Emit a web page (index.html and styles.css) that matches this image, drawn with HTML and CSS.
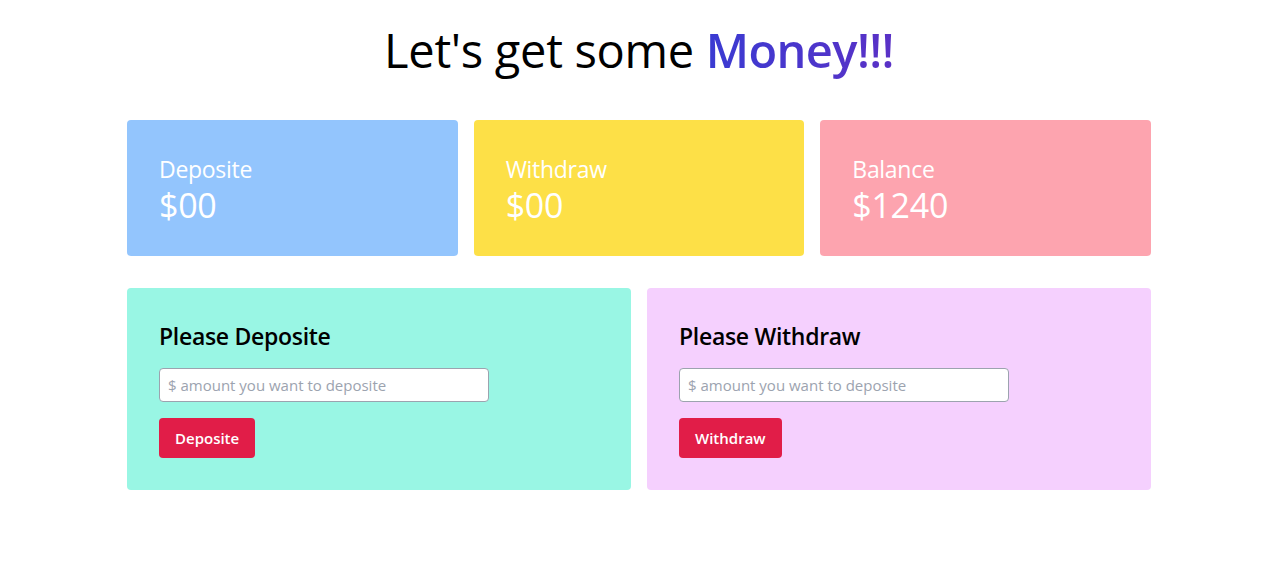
FILE: index.html
```html
<!DOCTYPE html>
<html lang="en">
<head>
<meta charset="utf-8">
<title>Money</title>
<link rel="stylesheet" href="styles.css">
</head>
<body>
<main class="app">
  <h1 class="title">Let's get some <span class="money">Money!!!</span></h1>
  <section class="stats">
    <div class="stat stat-blue">
      <div class="stat-label">Deposite</div>
      <div class="stat-value">$00</div>
    </div>
    <div class="stat stat-yellow">
      <div class="stat-label">Withdraw</div>
      <div class="stat-value">$00</div>
    </div>
    <div class="stat stat-pink">
      <div class="stat-label">Balance</div>
      <div class="stat-value">$1240</div>
    </div>
  </section>
  <section class="forms">
    <div class="panel panel-teal">
      <h2 class="panel-title">Please Deposite</h2>
      <input class="field" type="text" placeholder="$ amount you want to deposite">
      <button class="btn" type="button">Deposite</button>
    </div>
    <div class="panel panel-purple">
      <h2 class="panel-title">Please Withdraw</h2>
      <input class="field" type="text" placeholder="$ amount you want to deposite">
      <button class="btn" type="button">Withdraw</button>
    </div>
  </section>
</main>
</body>
</html>
```
FILE: styles.css
```css
* { box-sizing: border-box; }
html, body { margin: 0; padding: 0; background: #fff; }
body {
  font-family: "Open Sans", "Noto Sans", "Liberation Sans", sans-serif;
  color: #000;
  padding-left: 9px;
}
.app {
  width: 1024px;
  margin: 0 auto;
  padding-top: 26px;
}
.title {
  margin: 0;
  text-align: center;
  font-size: 47px;
  line-height: 48px;
  font-weight: 400;
  letter-spacing: -0.3px;
}
.money {
  font-weight: 600;
  letter-spacing: -0.6px;
  background: linear-gradient(90deg, #3a3bd2, #5a31c6);
  -webkit-background-clip: text;
  background-clip: text;
  color: transparent;
}
.stats {
  margin-top: 46px;
  display: grid;
  grid-template-columns: repeat(3, 1fr);
  gap: 16px;
}
.stat {
  padding: 33px 32px 31px;
  border-radius: 4px;
  color: #fff;
  height: 136px;
}
.stat-blue { background: #93c5fd; }
.stat-yellow { background: #fde047; }
.stat-pink { background: #fda4af; }
.stat-label { font-size: 23px; line-height: 32px; letter-spacing: -0.3px; }
.stat-value { font-size: 34px; line-height: 40px; letter-spacing: -0.3px; }
.forms {
  margin-top: 32px;
  display: grid;
  grid-template-columns: 1fr 1fr;
  gap: 16px;
}
.panel {
  padding: 32px;
  border-radius: 4px;
  display: flex;
  flex-direction: column;
  align-items: flex-start;
}
.panel-teal { background: #99f6e4; }
.panel-purple { background: #f5d0fe; }
.panel-title {
  margin: 0;
  font-size: 23px;
  line-height: 32px;
  font-weight: 600;
  letter-spacing: -0.3px;
}
.field {
  margin-top: 16px;
  width: 330px;
  height: 34px;
  border: 1px solid #9ca3af;
  border-radius: 4px;
  padding: 0 8px;
  font-family: inherit;
  font-size: 15px;
  background: #fff;
  outline: none;
}
.field::placeholder { color: #9ca3af; }
.btn {
  margin-top: 16px;
  height: 40px;
  padding: 0 16px;
  border: none;
  border-radius: 4px;
  background: #e11d48;
  color: #fff;
  font-family: inherit;
  font-size: 15px;
  font-weight: 600;
  cursor: pointer;
}
```
